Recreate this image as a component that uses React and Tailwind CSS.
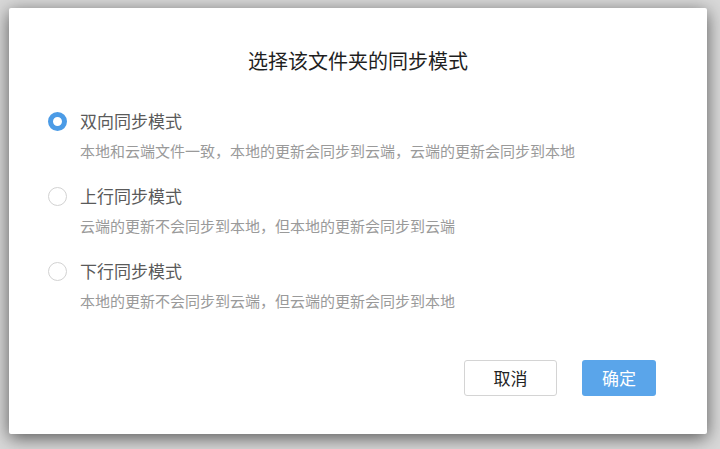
const options = [
  {
    title: '双向同步模式',
    desc: '本地和云端文件一致，本地的更新会同步到云端，云端的更新会同步到本地',
    checked: true,
  },
  {
    title: '上行同步模式',
    desc: '云端的更新不会同步到本地，但本地的更新会同步到云端',
    checked: false,
  },
  {
    title: '下行同步模式',
    desc: '本地的更新不会同步到云端，但云端的更新会同步到本地',
    checked: false,
  },
];

const Radio = ({ checked }) =>
  checked ? (
    <span className="w-[19px] h-[19px] rounded-full border-[5px] border-[#4b9be6] bg-white shrink-0" />
  ) : (
    <span className="w-[19px] h-[19px] rounded-full border border-[#d2d2d2] bg-white shrink-0" />
  );

export default function App() {
  return (
    <div
      className="w-[720px] h-[449px] bg-[#d9d9d9] pt-[8px] pl-[9px] overflow-hidden"
      style={{ fontFamily: '"Noto Sans CJK SC", "Noto Sans", sans-serif' }}
    >
      <div className="w-[698px] h-[426px] bg-white rounded-[2px] shadow-[0_4px_18px_rgba(0,0,0,0.6)] flex flex-col">
        <h1 className="pt-[39px] text-center text-[20px] leading-[28px] text-[#1f1f1f]">
          选择该文件夹的同步模式
        </h1>

        <div className="mt-[34px] pl-[39px] flex flex-col gap-[22px]">
          {options.map((o) => (
            <div key={o.title} className="flex flex-col">
              <div className="flex items-center gap-[13px] h-[24px]">
                <Radio checked={o.checked} />
                <span className="text-[17px] leading-[24px] text-[#5a5a5a]">{o.title}</span>
              </div>
              <p className="mt-[7px] pl-[32px] text-[15px] leading-[22px] text-[#9a9a9a]">{o.desc}</p>
            </div>
          ))}
        </div>

        <div className="mt-auto mb-[38px] pr-[51px] flex justify-end gap-[25px]">
          <button className="w-[93px] h-[36px] rounded-[3px] border border-[#d4d4d4] bg-white text-[17px] text-[#222222]">
            取消
          </button>
          <button className="w-[74px] h-[36px] rounded-[3px] bg-[#5aa5ea] text-[17px] text-white">
            确定
          </button>
        </div>
      </div>
    </div>
  );
}
